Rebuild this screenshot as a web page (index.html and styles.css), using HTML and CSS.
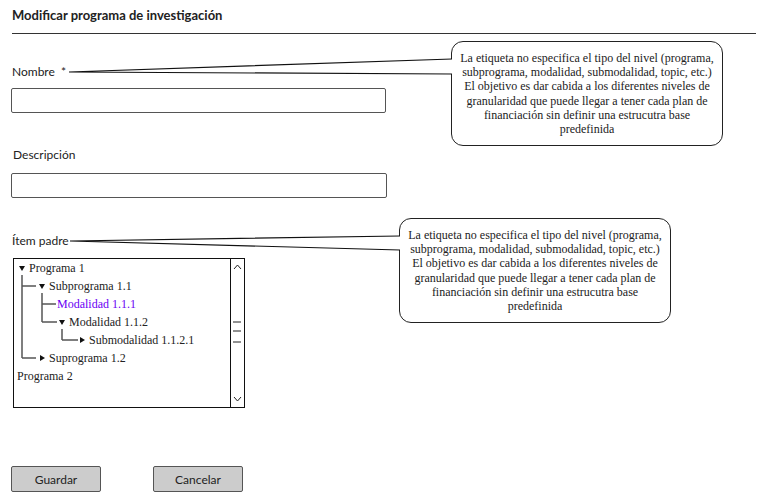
FILE: index.html
```html
<!DOCTYPE html>
<html lang="es">
<head>
    <meta charset="UTF-8">
    <title>Modificar programa de investigación</title>
    <link rel="stylesheet" href="styles.css">
</head>
<body>
    <div class="page">
        <h1 class="title">Modificar programa de investigación</h1>
        <div class="rule"></div>

        <label class="label label-nombre">Nombre &nbsp;*</label>
        <div class="input input-nombre"></div>

        <label class="label label-desc">Descripción</label>
        <div class="input input-desc"></div>

        <label class="label label-padre">Ítem padre</label>
        <div class="tree">
            <div class="tree-body">
                <svg class="tree-lines" width="218" height="147">
                    <path d="M8 16 V99 M8 27 H22 M8 99 H22 M28 34 V63 M28 45 H42 M28 63 H43 M48 70 V81 M48 81 H64" />
                </svg>
                <div class="row lvl0"><span class="caret down"></span>Programa 1</div>
                <div class="row lvl1"><span class="caret down"></span>Subprograma 1.1</div>
                <div class="row lvl2 selected">Modalidad 1.1.1</div>
                <div class="row lvl2b"><span class="caret down"></span>Modalidad 1.1.2</div>
                <div class="row lvl3"><span class="caret right"></span>Submodalidad 1.1.2.1</div>
                <div class="row lvl1b"><span class="caret right"></span>Suprograma 1.2</div>
                <div class="row leaf">Programa 2</div>
            </div>
            <div class="scrollbar">
                <svg width="13" height="147">
                    <path d="M3 10 L6.5 6 L10 10" />
                    <path d="M2 63 H10 M2 72 H10 M2 83 H10" />
                    <path d="M3 138 L6.5 142 L10 138" />
                </svg>
            </div>
        </div>

        <div class="buttons">
            <button class="btn">Guardar</button>
            <button class="btn">Cancelar</button>
        </div>

        <div class="callout callout-1">La etiqueta no especifica el tipo del nivel (programa, subprograma, modalidad, submodalidad, topic, etc.) El objetivo es dar cabida a los diferentes niveles de granularidad que puede llegar a tener cada plan de financiación sin definir una estrucutra base predefinida</div>
        <div class="callout callout-2">La etiqueta no especifica el tipo del nivel (programa, subprograma, modalidad, submodalidad, topic, etc.) El objetivo es dar cabida a los diferentes niveles de granularidad que puede llegar a tener cada plan de financiación sin definir una estrucutra base predefinida</div>

        <svg class="tails" width="766" height="502">
            <rect x="450" y="59" width="4" height="15" fill="#fff" />
            <path d="M69 72 L452 59 M69 72 L452 74" />
            <rect x="397" y="236" width="4" height="14" fill="#fff" />
            <path d="M70 241 L400 236 M70 241 L400 250" />
        </svg>
    </div>
</body>
</html>
```

FILE: styles.css
```css
body {
    margin: 0;
    background: #fff;
    font-family: Lato, "Liberation Sans", sans-serif;
    color: #222;
}
.page {
    position: relative;
    width: 766px;
    height: 502px;
    padding-left: 12px;
    box-sizing: border-box;
}
.title {
    margin: 0;
    padding-top: 7px;
    font-size: 13px;
    line-height: 16px;
    font-weight: bold;
}
.rule {
    margin-top: 10px;
    width: 744px;
    height: 1px;
    background: #333;
}
.label {
    display: block;
    font-size: 12px;
    line-height: 16px;
}
.label-nombre {
    margin-top: 30px;
}
.label-desc {
    margin-top: 34px;
    margin-left: 1px;
}
.label-padre {
    margin-top: 35px;
}
.input {
    height: 25px;
    box-sizing: border-box;
    border: 1.5px solid #555;
    border-radius: 2px;
    background: #fff;
}
.input-nombre {
    margin-top: 8px;
    margin-left: -1px;
    width: 375px;
}
.input-desc {
    margin-top: 10px;
    margin-left: -1px;
    width: 376px;
}
.tree {
    display: flex;
    margin-top: 9px;
    margin-left: 1px;
    width: 232px;
    height: 150px;
    box-sizing: border-box;
    border: 1px solid #111;
    font-family: "Liberation Serif", serif;
    font-size: 12px;
}
.tree-body {
    position: relative;
    flex: 1;
}
.tree-lines {
    position: absolute;
    left: 0;
    top: 0;
}
.tree-lines path {
    stroke: #555;
    stroke-width: 1.5;
    fill: none;
}
.row {
    position: relative;
    display: flex;
    align-items: center;
    height: 18px;
    white-space: nowrap;
}
.lvl0 { padding-left: 5px; }
.lvl1 { padding-left: 25px; }
.lvl1b { padding-left: 26px; }
.lvl2 { padding-left: 43px; }
.lvl2b { padding-left: 45px; }
.lvl3 { padding-left: 66px; }
.leaf { padding-left: 3px; }
.selected {
    color: #6a00f4;
}
.caret {
    width: 0;
    height: 0;
    margin-right: 4px;
}
.caret.down {
    border-left: 3px solid transparent;
    border-right: 3px solid transparent;
    border-top: 5px solid #111;
}
.caret.right {
    border-top: 3px solid transparent;
    border-bottom: 3px solid transparent;
    border-left: 5px solid #111;
}
.scrollbar {
    width: 13px;
    border-left: 1px solid #111;
}
.scrollbar path {
    stroke: #222;
    stroke-width: 1;
    fill: none;
}
.buttons {
    display: flex;
    gap: 52px;
    margin-top: 58px;
    margin-left: -1px;
}
.btn {
    width: 90px;
    height: 26px;
    padding: 0;
    background: #ccc;
    border: 1.5px solid #555;
    border-radius: 2px;
    font-family: Lato, "Liberation Sans", sans-serif;
    font-size: 12px;
    color: #222;
}
.callout {
    position: absolute;
    box-sizing: border-box;
    width: 272px;
    height: 105px;
    padding: 9px 7px 0;
    border: 1.5px solid #222;
    border-radius: 12px;
    background: #fff;
    font-family: "Liberation Serif", serif;
    font-size: 12px;
    line-height: 14.2px;
    text-align: center;
}
.callout-1 {
    left: 451px;
    top: 41px;
}
.callout-2 {
    left: 399px;
    top: 218px;
}
.tails {
    position: absolute;
    left: 0;
    top: 0;
}
.tails path {
    stroke: #111;
    stroke-width: 1.2;
    fill: none;
}
```
